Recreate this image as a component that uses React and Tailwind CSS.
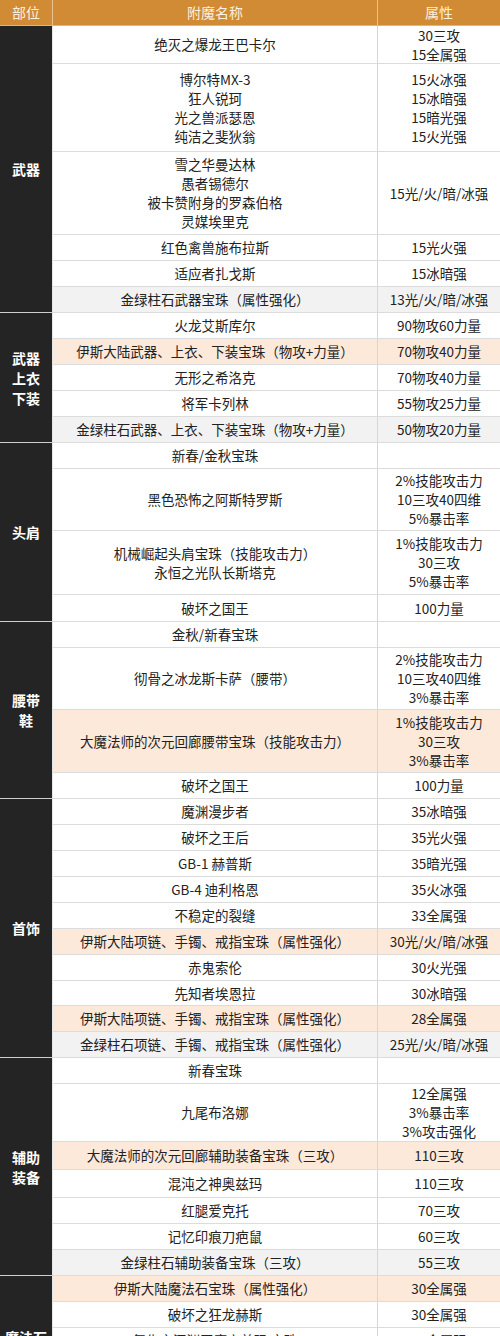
import React from 'react';

const groups = [
  {
    label: ['武器'],
    rows: [
      { h: 'h-[38px]', name: ['绝灭之爆龙王巴卡尔'], attr: ['30三攻', '15全属强'] },
      { h: 'h-[88px]', name: ['博尔特MX-3', '狂人锐珂', '光之兽派瑟恩', '纯洁之斐狄翁'], attr: ['15火冰强', '15冰暗强', '15暗光强', '15火光强'] },
      { h: 'h-[83px]', name: ['雪之华曼达林', '愚者锡德尔', '被卡赞附身的罗森伯格', '灵媒埃里克'], attr: ['15光/火/暗/冰强'] },
      { h: 'h-[26px]', name: ['红色禽兽施布拉斯'], attr: ['15光火强'] },
      { h: 'h-[26px]', name: ['适应者扎戈斯'], attr: ['15冰暗强'] },
      { h: 'h-[26px]', name: ['金绿柱石武器宝珠（属性强化）'], attr: ['13光/火/暗/冰强'], bg: 'gray' },
    ],
  },
  {
    label: ['武器', '上衣', '下装'],
    rows: [
      { h: 'h-[26px]', name: ['火龙艾斯库尔'], attr: ['90物攻60力量'] },
      { h: 'h-[26px]', name: ['伊斯大陆武器、上衣、下装宝珠（物攻+力量）'], attr: ['70物攻40力量'], bg: 'peach' },
      { h: 'h-[26px]', name: ['无形之希洛克'], attr: ['70物攻40力量'] },
      { h: 'h-[26px]', name: ['将军卡列林'], attr: ['55物攻25力量'] },
      { h: 'h-[26px]', name: ['金绿柱石武器、上衣、下装宝珠（物攻+力量）'], attr: ['50物攻20力量'], bg: 'gray' },
    ],
  },
  {
    label: ['头肩'],
    rows: [
      { h: 'h-[26px]', name: ['新春/金秋宝珠'], attr: [] },
      { h: 'h-[62px]', name: ['黑色恐怖之阿斯特罗斯'], attr: ['2%技能攻击力', '10三攻40四维', '5%暴击率'] },
      { h: 'h-[64px]', name: ['机械崛起头肩宝珠（技能攻击力）', '永恒之光队长斯塔克'], attr: ['1%技能攻击力', '30三攻', '5%暴击率'] },
      { h: 'h-[27px]', name: ['破坏之国王'], attr: ['100力量'] },
    ],
  },
  {
    label: ['腰带', '鞋'],
    rows: [
      { h: 'h-[26px]', name: ['金秋/新春宝珠'], attr: [] },
      { h: 'h-[62px]', name: ['彻骨之冰龙斯卡萨（腰带）'], attr: ['2%技能攻击力', '10三攻40四维', '3%暴击率'] },
      { h: 'h-[63px]', name: ['大魔法师的次元回廊腰带宝珠（技能攻击力）'], attr: ['1%技能攻击力', '30三攻', '3%暴击率'], bg: 'peach' },
      { h: 'h-[26px]', name: ['破坏之国王'], attr: ['100力量'] },
    ],
  },
  {
    label: ['首饰'],
    rows: [
      { h: 'h-[26px]', name: ['魔渊漫步者'], attr: ['35冰暗强'] },
      { h: 'h-[26px]', name: ['破坏之王后'], attr: ['35光火强'] },
      { h: 'h-[26px]', name: ['GB-1 赫普斯'], attr: ['35暗光强'] },
      { h: 'h-[26px]', name: ['GB-4 迪利格恩'], attr: ['35火冰强'] },
      { h: 'h-[26px]', name: ['不稳定的裂缝'], attr: ['33全属强'] },
      { h: 'h-[26px]', name: ['伊斯大陆项链、手镯、戒指宝珠（属性强化）'], attr: ['30光/火/暗/冰强'], bg: 'peach' },
      { h: 'h-[26px]', name: ['赤鬼索伦'], attr: ['30火光强'] },
      { h: 'h-[25px]', name: ['先知者埃恩拉'], attr: ['30冰暗强'] },
      { h: 'h-[26px]', name: ['伊斯大陆项链、手镯、戒指宝珠（属性强化）'], attr: ['28全属强'], bg: 'peach' },
      { h: 'h-[26px]', name: ['金绿柱石项链、手镯、戒指宝珠（属性强化）'], attr: ['25光/火/暗/冰强'], bg: 'gray' },
    ],
  },
  {
    label: ['辅助', '装备'],
    rows: [
      { h: 'h-[26px]', name: ['新春宝珠'], attr: [] },
      { h: 'h-[58px]', name: ['九尾布洛娜'], attr: ['12全属强', '3%暴击率', '3%攻击强化'] },
      { h: 'h-[28px]', name: ['大魔法师的次元回廊辅助装备宝珠（三攻）'], attr: ['110三攻'], bg: 'peach' },
      { h: 'h-[28px]', name: ['混沌之神奥兹玛'], attr: ['110三攻'] },
      { h: 'h-[26px]', name: ['红腿爱克托'], attr: ['70三攻'] },
      { h: 'h-[26px]', name: ['记忆印痕刀疤鼠'], attr: ['60三攻'] },
      { h: 'h-[26px]', name: ['金绿柱石辅助装备宝珠（三攻）'], attr: ['55三攻'], bg: 'gray' },
    ],
  },
  {
    label: ['魔法石'],
    rows: [
      { h: 'h-[26px]', name: ['伊斯大陆魔法石宝珠（属性强化）'], attr: ['30全属强'], bg: 'peach' },
      { h: 'h-[26px]', name: ['破坏之狂龙赫斯'], attr: ['30全属强'] },
      { h: 'h-[26px]', name: ['复仇之深渊恶魔安普玛 宝珠'], attr: ['30全属强'] },
      { h: 'h-[44px]', name: [''], attr: [] },
    ],
  },
];

const bgClass = {
  peach: 'bg-[#fde9da]',
  gray: 'bg-[#f2f2f2]',
  none: 'bg-white',
};

function Lines({ items }) {
  return (
    <div className="flex flex-col items-center">
      {items.map((t, i) => (
        <div key={i} className="leading-[19px] whitespace-nowrap">
          {t}
        </div>
      ))}
    </div>
  );
}

export default function App() {
  return (
    <div
      className="w-[500px] bg-white text-[13.5px] text-[#222222]"
      style={{ fontFamily: '"Noto Sans CJK SC", "Noto Sans", sans-serif' }}
    >
      <div className="flex h-[26px] bg-[#d18b34] text-[14px] text-[#fdf0dc] border-b border-[#e2b679]">
        <div className="w-[53px] flex items-center justify-center border-r border-[#e8c58f]">部位</div>
        <div className="w-[325px] flex items-center justify-center border-r border-[#e8c58f]">附魔名称</div>
        <div className="flex-1 flex items-center justify-center">属性</div>
      </div>
      {groups.map((g, gi) => (
        <div key={gi} className="flex">
          <div className="w-[53px] shrink-0 flex flex-col items-center justify-center bg-[#242424] border-r border-[#e6e6e6] border-b border-b-[#cfcfcf] text-white font-bold text-[14px]">
            {g.label.map((l, li) => (
              <div key={li} className="leading-[20px]">
                {l}
              </div>
            ))}
          </div>
          <div className="flex-1 flex flex-col">
            {g.rows.map((r, ri) => (
              <div
                key={ri}
                className={`${r.h} flex border-b border-[#dcdcdc] ${bgClass[r.bg || 'none']}`}
              >
                <div className="w-[325px] shrink-0 flex items-center justify-center border-r border-[#d6d6d6]">
                  <Lines items={r.name} />
                </div>
                <div className="flex-1 flex items-center justify-center">
                  <Lines items={r.attr} />
                </div>
              </div>
            ))}
          </div>
        </div>
      ))}
    </div>
  );
}
